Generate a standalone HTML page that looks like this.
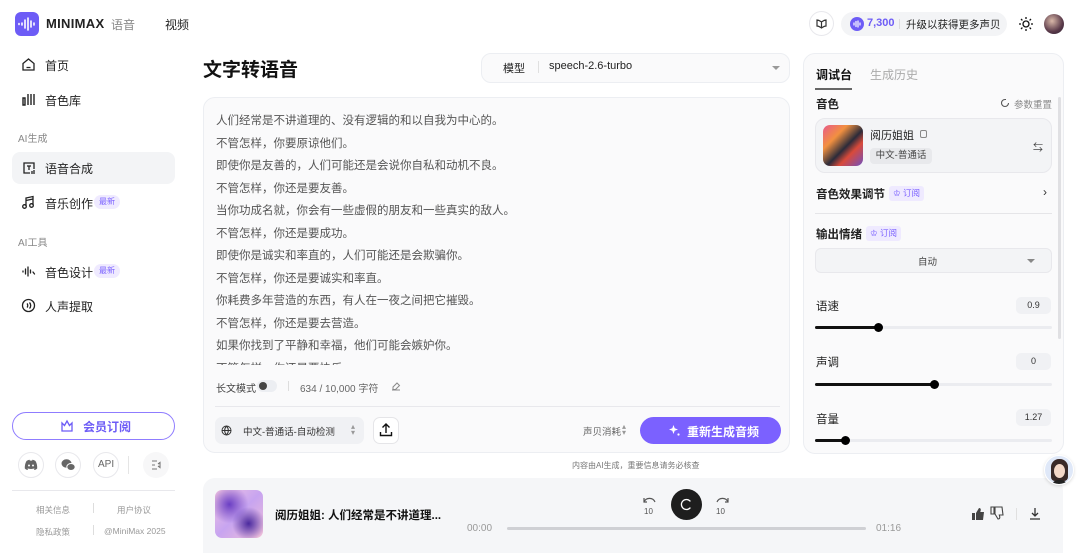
<!DOCTYPE html>
<html><head><meta charset="utf-8"><style>
*{margin:0;padding:0;box-sizing:border-box}
body{width:1080px;height:553px;overflow:hidden;background:#fff;font-family:"Liberation Sans","Noto Sans CJK SC",sans-serif;color:#222;position:relative}
.a{position:absolute;white-space:nowrap}
.nav{font-size:12px;color:#222}
.sec{font-size:10px;color:#888}
.badge{font-size:8px;color:#7b61ff;background:#efeaff;border-radius:8px;padding:1px 5px;line-height:12px}
.line{font-size:11.5px;color:#555;left:216px}
.card{position:absolute;border:1px solid #eceef2;border-radius:12px;background:#fafafb}
.ic{position:absolute;border:1px solid #e8e8ec;border-radius:50%;width:26px;height:26px;background:#fff}
.lbl{font-size:11.5px;font-weight:bold;color:#222}
.vbox{position:absolute;background:#f0f1f4;border-radius:5px;font-size:9px;color:#333;text-align:center;line-height:17px;width:35px;height:17px;left:1016px}
.track{position:absolute;left:815px;width:237px;height:3px;background:#ebecf0;border-radius:2px}
.fill{position:absolute;left:0;top:0;height:3px;background:#111;border-radius:2px}
.knob{position:absolute;top:-3px;width:9px;height:9px;border-radius:50%;background:#000}
.sub{font-size:8.5px;color:#7b61ff;background:#efeaff;border-radius:3px;padding:0 4px;line-height:15px;height:15px}
</style></head><body>
<!-- header -->
<div class="a" style="left:15px;top:12px;width:24px;height:24px;border-radius:6px;background:#6d5cf6"></div>
<svg class="a" style="left:17px;top:14px" width="20" height="20" viewBox="0 0 20 20" stroke="#fff" stroke-width="1.6" stroke-linecap="round"><path d="M5 9v2M8 6v8M11 4v12M14 7v6M17 9v2M2 9.5v1"/></svg>
<div class="a" style="left:46px;top:16px;font-size:13px;font-weight:bold;letter-spacing:0.3px">MINIMAX</div>
<div class="a" style="left:111px;top:16px;font-size:12px;color:#888">语音</div>
<div class="a" style="left:165px;top:16px;font-size:12px;color:#222">视频</div>
<div class="ic" style="left:809px;top:11px;width:25px;height:25px"></div>
<svg class="a" style="left:815px;top:17px" width="13" height="13" viewBox="0 0 13 13" fill="none" stroke="#333" stroke-width="1.2"><path d="M2 3c2 0 3 1 4.5 2C8 4 9 3 11 3v6c-2 0-3 1-4.5 2C5 10 4 9 2 9z M6.5 5v6"/></svg>
<div class="a" style="left:841px;top:12px;width:166px;height:24px;border-radius:12px;background:#f3f4f6"></div>
<div class="a" style="left:850px;top:17px;width:14px;height:14px;border-radius:50%;background:#6d5cf6"></div>
<svg class="a" style="left:851px;top:18px" width="12" height="12" viewBox="0 0 12 12" stroke="#fff" stroke-width="1.2" stroke-linecap="round"><path d="M3 5v2M5 3.5v5M7 3v6M9 5v2"/></svg>
<div class="a" style="left:867px;top:17px;font-size:11px;font-weight:bold;color:#6d5cf6">7,300</div>
<div class="a" style="left:899px;top:19px;width:1px;height:10px;background:#ddd"></div>
<div class="a" style="left:906px;top:17px;font-size:10.5px;color:#222">升级以获得更多声贝</div>
<svg class="a" style="left:1018px;top:16px" width="16" height="16" viewBox="0 0 16 16" fill="none" stroke="#111" stroke-width="1.3"><circle cx="8" cy="8" r="3"/><path d="M8 1v2M8 13v2M1 8h2M13 8h2M3 3l1.4 1.4M11.6 11.6L13 13M3 13l1.4-1.4M11.6 4.4L13 3"/></svg>
<div class="a" style="left:1044px;top:14px;width:20px;height:20px;border-radius:50%;background:radial-gradient(circle at 40% 35%,#d9b8a8,#5a3a4a 60%,#2a1e30)"></div>
<!-- sidebar -->
<svg class="a" style="left:21px;top:57px" width="15" height="15" viewBox="0 0 15 15" fill="none" stroke="#222" stroke-width="1.3"><path d="M2 6.5L7.5 2 13 6.5V13H2z M5.5 10.5h4"/></svg>
<div class="a nav" style="left:45px;top:57px">首页</div>
<svg class="a" style="left:21px;top:92px" width="15" height="15" viewBox="0 0 15 15" fill="none" stroke="#222" stroke-width="1.4"><path d="M2 6v7h2V6z M7 2v11 M10 2v11 M13 2v11"/></svg>
<div class="a nav" style="left:45px;top:92px">音色库</div>
<div class="a sec" style="left:18px;top:130px">AI生成</div>
<div class="a" style="left:12px;top:152px;width:163px;height:32px;border-radius:8px;background:#f3f4f6"></div>
<svg class="a" style="left:21px;top:160px" width="16" height="16" viewBox="0 0 16 16" fill="none" stroke="#222" stroke-width="1.3"><path d="M9 13H3V3h10v6 M6 6h4M8 6v4 M11 11v3M13 10v4"/></svg>
<div class="a nav" style="left:45px;top:160px">语音合成</div>
<svg class="a" style="left:21px;top:195px" width="15" height="15" viewBox="0 0 15 15" fill="none" stroke="#222" stroke-width="1.3"><path d="M5 11V3l7-1.5V10 M5 5.5l7-1.5"/><circle cx="3.5" cy="11.5" r="1.8"/><circle cx="10.5" cy="10.5" r="1.8"/></svg>
<div class="a nav" style="left:45px;top:195px">音乐创作</div>
<div class="a badge" style="left:94px;top:195px">最新</div>
<div class="a sec" style="left:18px;top:234px">AI工具</div>
<svg class="a" style="left:21px;top:264px" width="15" height="15" viewBox="0 0 15 15" fill="none" stroke="#222" stroke-width="1.3" stroke-linecap="round"><path d="M2 7v1M4.5 5v5M7 3v9M9.5 6v3M12 8l1.5 2"/></svg>
<div class="a nav" style="left:45px;top:264px">音色设计</div>
<div class="a badge" style="left:94px;top:264px">最新</div>
<svg class="a" style="left:21px;top:298px" width="15" height="15" viewBox="0 0 15 15" fill="none" stroke="#222" stroke-width="1.3"><circle cx="7.5" cy="7.5" r="6"/><path d="M6 5.5c1 1 1 3 0 4 M8.5 4.5c1.6 1.7 1.6 4.3 0 6"/></svg>
<div class="a nav" style="left:45px;top:298px">人声提取</div>
<div class="a" style="left:12px;top:412px;width:163px;height:28px;border:1.3px solid #8f7cff;border-radius:14px"></div>
<svg class="a" style="left:60px;top:419px" width="14" height="14" viewBox="0 0 14 14" fill="none" stroke="#6d5cf6" stroke-width="1.3"><path d="M2 4l2.5 2.5L7 2l2.5 4.5L12 4v8H2z"/></svg>
<div class="a" style="left:83px;top:418px;font-size:12px;color:#6d5cf6;font-weight:bold">会员订阅</div>
<div class="ic" style="left:18px;top:452px"></div>
<svg class="a" style="left:24px;top:459px" width="14" height="12" viewBox="0 0 14 12"><path d="M2.5 2C4 1 5.5.8 5.5.8l.4.8h2.2l.4-.8S10 1 11.5 2C13 4.5 13.3 7 13.2 9.5 12 10.7 10.5 11 10.5 11l-.7-1.2c1-.4 1.3-.8 1.3-.8-2.5 1.3-5.700 1.3-8.2 0 0 0 .3.4 1.3.8L3.5 11S2 10.7.8 9.5C.7 7 1 4.5 2.5 2z" fill="#666"/><circle cx="5" cy="6.5" r="1" fill="#fff"/><circle cx="9" cy="6.5" r="1" fill="#fff"/></svg>
<div class="ic" style="left:55px;top:452px"></div>
<svg class="a" style="left:61px;top:458px" width="15" height="14" viewBox="0 0 15 14" fill="#666"><ellipse cx="5.5" cy="5.5" rx="5" ry="4.2"/><ellipse cx="10" cy="9" rx="4.2" ry="3.5" stroke="#fff" stroke-width="1"/></svg>
<div class="ic" style="left:93px;top:452px"></div>
<div class="a" style="left:98px;top:459px;font-size:10px;color:#666">API</div>
<div class="a" style="left:128px;top:456px;width:1px;height:18px;background:#e5e5e5"></div>
<div class="a" style="left:143px;top:452px;width:26px;height:26px;border-radius:50%;background:#f7f7f8"></div>
<svg class="a" style="left:150px;top:459px" width="12" height="12" viewBox="0 0 12 12" fill="none" stroke="#777" stroke-width="1.1"><path d="M2 2h5M2 6h3M2 10h5 M8 5l2-1.5v5L8 7"/></svg>
<div class="a" style="left:12px;top:490px;width:163px;height:1px;background:#e8e8ec"></div>
<div class="a" style="left:36px;top:504px;font-size:8.5px;color:#999">相关信息</div>
<div class="a" style="left:93px;top:503px;width:1px;height:10px;background:#ddd"></div>
<div class="a" style="left:117px;top:504px;font-size:8.5px;color:#999">用户协议</div>
<div class="a" style="left:36px;top:526px;font-size:8.5px;color:#999">隐私政策</div>
<div class="a" style="left:93px;top:525px;width:1px;height:10px;background:#ddd"></div>
<div class="a" style="left:104px;top:526px;font-size:8.5px;color:#999">@MiniMax 2025</div>
<!-- main -->
<div class="a" style="left:203px;top:55px;font-size:19px;font-weight:bold;color:#111">文字转语音</div>
<div class="card" style="left:481px;top:53px;width:309px;height:30px;border-radius:10px"></div>
<div class="a" style="left:503px;top:60px;font-size:11px">模型</div>
<div class="a" style="left:538px;top:61px;width:1px;height:12px;background:#e0e0e0"></div>
<div class="a" style="left:549px;top:60px;font-size:11px">speech-2.6-turbo</div>
<div class="a" style="left:772px;top:66px;border:4px solid transparent;border-top:4px solid #999"></div>
<div class="card" style="left:203px;top:97px;width:587px;height:356px"></div>
<div class="a line" style="top:112px">人们经常是不讲道理的、没有逻辑的和以自我为中心的。</div>
<div class="a line" style="top:135px">不管怎样，你要原谅他们。</div>
<div class="a line" style="top:157px">即使你是友善的，人们可能还是会说你自私和动机不良。</div>
<div class="a line" style="top:180px">不管怎样，你还是要友善。</div>
<div class="a line" style="top:202px">当你功成名就，你会有一些虚假的朋友和一些真实的敌人。</div>
<div class="a line" style="top:225px">不管怎样，你还是要成功。</div>
<div class="a line" style="top:247px">即使你是诚实和率直的，人们可能还是会欺骗你。</div>
<div class="a line" style="top:270px">不管怎样，你还是要诚实和率直。</div>
<div class="a line" style="top:292px">你耗费多年营造的东西，有人在一夜之间把它摧毁。</div>
<div class="a line" style="top:315px">不管怎样，你还是要去营造。</div>
<div class="a line" style="top:337px">如果你找到了平静和幸福，他们可能会嫉妒你。</div>
<div class="a line" style="top:360px;height:5px;overflow:hidden">不管怎样，你还是要快乐。</div>
<div class="a" style="left:216px;top:380px;font-size:10px;color:#444">长文模式</div>
<div class="a" style="left:257px;top:380px;width:20px;height:12px;border-radius:6px;background:#eceef2"></div>
<div class="a" style="left:259px;top:382px;width:8px;height:8px;border-radius:50%;background:#444"></div>
<div class="a" style="left:288px;top:381px;width:1px;height:10px;background:#ddd"></div>
<div class="a" style="left:300px;top:380px;font-size:10px;color:#666">634 / 10,000 字符</div>
<svg class="a" style="left:391px;top:381px" width="10" height="10" viewBox="0 0 10 10" fill="none" stroke="#888"><path d="M2 6l4-4 2.5 2.5-4 4H2z M1 9h8"/></svg>
<div class="a" style="left:215px;top:406px;width:565px;height:1px;background:#e8e8ec"></div>
<div class="a" style="left:215px;top:417px;width:149px;height:27px;border-radius:7px;background:#f0f1f4"></div>
<svg class="a" style="left:221px;top:425px" width="11" height="11" viewBox="0 0 11 11" fill="none" stroke="#333" stroke-width="1"><circle cx="5.5" cy="5.5" r="4.5"/><path d="M1 5.5h9M5.5 1c-2.5 3-2.5 6 0 9M5.5 1c2.5 3 2.5 6 0 9"/></svg>
<div class="a" style="left:243px;top:424px;font-size:9.5px;color:#333">中文-普通话-自动检测</div>
<div class="a" style="left:351px;top:424px;font-size:8px;color:#999;line-height:6px">▴<br>▾</div>
<div class="a" style="left:373px;top:417px;width:26px;height:27px;border:1px solid #e5e5e8;border-radius:7px;background:#fff"></div>
<svg class="a" style="left:378px;top:422px" width="16" height="16" viewBox="0 0 16 16" fill="none" stroke="#111" stroke-width="1.4"><path d="M8 2v9M4.5 5.5L8 2l3.5 3.5 M2.5 10v3.5h11V10"/></svg>
<div class="a" style="left:583px;top:424px;font-size:9.5px;color:#666">声贝消耗</div>
<div class="a" style="left:622px;top:424px;font-size:8px;color:#999;line-height:6px">▴<br>▾</div>
<div class="a" style="left:640px;top:417px;width:141px;height:27px;border-radius:14px;background:#7b61ff"></div>
<svg class="a" style="left:668px;top:424px" width="13" height="13" viewBox="0 0 13 13" fill="#fff"><path d="M5.5 1l1.2 3.3L10 5.5 6.7 6.7 5.5 10 4.3 6.7 1 5.5 4.3 4.3z"/><circle cx="10.5" cy="10.5" r="1.1"/></svg>
<div class="a" style="left:687px;top:423px;font-size:12px;font-weight:bold;color:#fff">重新生成音频</div>
<div class="a" style="left:572px;top:460px;font-size:8px;color:#777">内容由AI生成，重要信息请务必核查</div>
<!-- player -->
<div class="a" style="left:203px;top:478px;width:860px;height:75px;border-radius:12px 12px 0 0;background:#f5f6f8"></div>
<div class="a" style="left:215px;top:490px;width:48px;height:48px;border-radius:7px;background:radial-gradient(circle at 30% 30%,#6b3fc4,transparent 40%),radial-gradient(circle at 70% 70%,#4b2a9e,transparent 35%),linear-gradient(135deg,#f3c6e0,#c7a4f0 50%,#f0c0d8)"></div>
<div class="a" style="left:275px;top:507px;font-size:11.5px;font-weight:bold;color:#111">阅历姐姐: 人们经常是不讲道理...</div>
<svg class="a" style="left:640px;top:494px" width="20" height="22" viewBox="0 0 20 22" fill="none" stroke="#555" stroke-width="1.2"><path d="M4 8a6 6 0 0 1 11 0 M4 4v4h3"/><text x="4" y="20" font-size="8" fill="#555" stroke="none" font-family="Liberation Sans">10</text></svg>
<div class="a" style="left:671px;top:489px;width:31px;height:31px;border-radius:50%;background:#1e1e1e"></div>
<svg class="a" style="left:679px;top:497px" width="15" height="15" viewBox="0 0 15 15" fill="none" stroke="#fff" stroke-width="1.3" stroke-linecap="round"><path d="M11 4a5 5 0 1 0 0 7"/></svg>
<svg class="a" style="left:712px;top:494px" width="20" height="22" viewBox="0 0 20 22" fill="none" stroke="#555" stroke-width="1.2"><path d="M5 8a6 6 0 0 1 11 0 M16 4v4h-3"/><text x="4" y="20" font-size="8" fill="#555" stroke="none" font-family="Liberation Sans">10</text></svg>
<div class="a" style="left:467px;top:523px;font-size:10px;color:#999">00:00</div>
<div class="a" style="left:507px;top:527px;width:359px;height:3px;border-radius:2px;background:#cfd0d4"></div>
<div class="a" style="left:876px;top:523px;font-size:10px;color:#999">01:16</div>
<svg class="a" style="left:971px;top:507px" width="14" height="14" viewBox="0 0 14 14" fill="#444"><path d="M1 6h3v7H1z M5 6l3-5c1.5 0 2 1 1.7 2.5L9.3 5H13l-1 8H5z"/></svg>
<svg class="a" style="left:990px;top:506px" width="14" height="14" viewBox="0 0 14 14" fill="none" stroke="#444" stroke-width="1.1"><path d="M1 1h3v7H1z M5 8l3 5c1.5 0 2-1 1.7-2.5L9.3 9H13l-1-8H5z"/></svg>
<div class="a" style="left:1016px;top:508px;width:1px;height:12px;background:#e0e0e0"></div>
<svg class="a" style="left:1029px;top:507px" width="12" height="13" viewBox="0 0 12 13" fill="none" stroke="#333" stroke-width="1.3"><path d="M6 1v8M3 6l3 3 3-3 M1 12h10"/></svg>
<!-- right panel -->
<div class="card" style="left:803px;top:53px;width:261px;height:401px;background:#fafafb"></div>
<div class="a" style="left:816px;top:66px;font-size:12px;font-weight:bold;color:#111">调试台</div>
<div class="a" style="left:870px;top:66px;font-size:12px;color:#aaa">生成历史</div>
<div class="a" style="left:815px;top:88px;width:37px;height:2px;background:#666"></div>
<div class="a" style="left:1058px;top:97px;width:3px;height:242px;background:#e0e0e3;border-radius:2px"></div>
<div class="a lbl" style="left:816px;top:96px">音色</div>
<svg class="a" style="left:1000px;top:98px" width="10" height="10" viewBox="0 0 10 10" fill="none" stroke="#555" stroke-width="1.1"><path d="M8.5 5A3.5 3.5 0 1 1 5 1.5h1"/></svg>
<div class="a" style="left:1014px;top:97px;font-size:9.5px;color:#888">参数重置</div>
<div class="a" style="left:815px;top:118px;width:237px;height:55px;border:1px solid #e8e8ec;border-radius:10px;background:#f3f4f6"></div>
<div class="a" style="left:823px;top:125px;width:40px;height:41px;border-radius:7px;background:linear-gradient(135deg,#e85a8a 0%,#f29040 30%,#2b2b3a 55%,#d94a3a 70%,#7050c0 100%)"></div>
<div class="a" style="left:870px;top:127px;font-size:11px;color:#222">阅历姐姐</div>
<div class="a" style="left:920px;top:130px;width:7px;height:8px;border:1px solid #888;border-radius:2px"></div>
<div class="a" style="left:870px;top:148px;width:62px;height:16px;border-radius:4px;background:#e8e9ec;font-size:9.5px;color:#444;text-align:center;line-height:16px">中文-普通话</div>
<div class="a" style="left:1033px;top:139px;font-size:10px;color:#444">⇆</div>
<div class="a lbl" style="left:816px;top:186px">音色效果调节</div>
<div class="a sub" style="left:889px;top:186px">♔ 订阅</div>
<div class="a" style="left:1043px;top:185px;font-size:12px;color:#333">›</div>
<div class="a" style="left:815px;top:213px;width:237px;height:1px;background:#e5e5e8"></div>
<div class="a lbl" style="left:816px;top:226px">输出情绪</div>
<div class="a sub" style="left:866px;top:226px">♔ 订阅</div>
<div class="a" style="left:815px;top:248px;width:237px;height:25px;border:1px solid #e8e8ec;border-radius:6px;background:#f3f4f6"></div>
<div class="a" style="left:918px;top:254px;font-size:9.5px;color:#444">自动</div>
<div class="a" style="left:1027px;top:259px;border:4px solid transparent;border-top:4px solid #888"></div>
<div class="a lbl" style="left:816px;top:298px;font-weight:normal">语速</div>
<div class="vbox" style="top:297px">0.9</div>
<div class="track" style="top:326px"><div class="fill" style="width:63px"></div><div class="knob" style="left:59px"></div></div>
<div class="a lbl" style="left:816px;top:354px;font-weight:normal">声调</div>
<div class="vbox" style="top:353px">0</div>
<div class="track" style="top:383px"><div class="fill" style="width:119px"></div><div class="knob" style="left:115px"></div></div>
<div class="a lbl" style="left:816px;top:411px;font-weight:normal">音量</div>
<div class="vbox" style="top:409px">1.27</div>
<div class="track" style="top:439px"><div class="fill" style="width:30px"></div><div class="knob" style="left:26px"></div></div>
<div class="a" style="left:1044px;top:455px;width:30px;height:30px;border-radius:50%;background:#dfe8f8;border:1px solid #fff;box-shadow:0 1px 3px rgba(0,0,0,.15);overflow:hidden">
<div style="position:absolute;left:6px;top:3px;width:17px;height:22px;border-radius:8px 8px 4px 4px;background:#3a2a28"></div>
<div style="position:absolute;left:9px;top:8px;width:11px;height:14px;border-radius:50%;background:#f4d8c8"></div>
<div style="position:absolute;left:7px;top:24px;width:15px;height:8px;border-radius:6px 6px 0 0;background:#222"></div>
</div>
</body></html>
